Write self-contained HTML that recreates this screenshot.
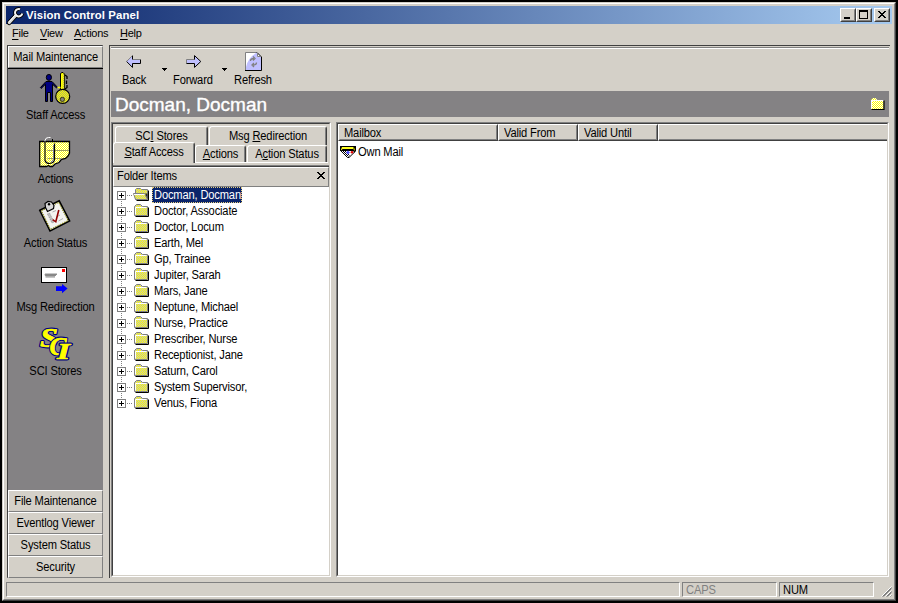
<!DOCTYPE html>
<html><head><meta charset="utf-8"><title>Vision Control Panel</title><style>
html,body{margin:0;padding:0;background:#000;}
body{width:898px;height:603px;position:relative;overflow:hidden;font-family:"Liberation Sans",sans-serif;font-size:11px;color:#000;}
div,span{position:absolute;box-sizing:border-box;white-space:nowrap;}
u{text-decoration:underline;text-decoration-thickness:1px;text-underline-offset:1px;}
.m u{text-underline-offset:2px;}
.m{font-size:11px;line-height:13px;height:13px;letter-spacing:-0.25px;}
.t{font-size:12.5px;line-height:14px;height:14px;letter-spacing:-0.17px;transform:scaleX(.89);transform-origin:0 0;}
.c{text-align:center;transform-origin:50% 0;}
svg{position:absolute;overflow:visible;}
.btn{background:#d4d0c8;border:1px solid;border-color:#fff #808080 #808080 #fff;}
.sunk1{border:1px solid;border-color:#808080 #fff #fff #808080;}
</style></head><body>
<div style="left:2px;top:2px;width:894px;height:599px;background:#d4d0c8;border:1px solid;border-color:#d4d0c8 #404040 #404040 #d4d0c8;"></div>
<div style="left:3px;top:3px;width:892px;height:597px;border:1px solid;border-color:#fff #808080 #808080 #fff;"></div>
<div style="left:6px;top:6px;width:886px;height:18px;background:linear-gradient(to right,#0a246a 0%,#a6caf0 100%);"></div>
<div style="left:26px;top:9px;line-height:13px;color:#fff;font-weight:bold;font-size:11.4px;letter-spacing:0.1px;">Vision Control Panel</div>
<svg style="left:0px;top:0.7px" width="30" height="26" viewBox="0 0 30 26">
<path d="M9.2 21.8 L15.6 14.8" stroke="#000" stroke-width="4.6" stroke-linecap="round" fill="none"/>
<path d="M20.0 8.2 A3.7 3.7 0 1 0 22.3 12.6" fill="none" stroke="#000" stroke-width="3.8"/>
<path d="M9.2 21.8 L15.8 14.6" stroke="#d8d8d8" stroke-width="2.8" stroke-linecap="round" fill="none"/>
<path d="M8.8 21 L15 14.2" stroke="#fff" stroke-width="1" stroke-linecap="round" fill="none"/>
<path d="M20.0 8.2 A3.7 3.7 0 1 0 22.3 12.6" fill="none" stroke="#f0f0f0" stroke-width="2"/>
</svg>

<div style="left:840px;top:8px;width:16px;height:14px;background:#d4d0c8;border:1px solid;border-color:#fff #404040 #404040 #fff;"></div>
<div style="left:841px;top:9px;width:14px;height:12px;border:1px solid;border-color:#d4d0c8 #808080 #808080 #d4d0c8;"></div>
<div style="left:856px;top:8px;width:16px;height:14px;background:#d4d0c8;border:1px solid;border-color:#fff #404040 #404040 #fff;"></div>
<div style="left:857px;top:9px;width:14px;height:12px;border:1px solid;border-color:#d4d0c8 #808080 #808080 #d4d0c8;"></div>
<div style="left:874px;top:8px;width:16px;height:14px;background:#d4d0c8;border:1px solid;border-color:#fff #404040 #404040 #fff;"></div>
<div style="left:875px;top:9px;width:14px;height:12px;border:1px solid;border-color:#d4d0c8 #808080 #808080 #d4d0c8;"></div>
<div style="left:844px;top:17px;width:6px;height:2px;background:#000;"></div>
<div style="left:859px;top:10px;width:9px;height:9px;border:1px solid #000;border-top-width:2px;"></div>
<svg style="left:878px;top:11px" width="8" height="7" viewBox="0 0 8 7"><path d="M0 0h2v1h1v1h2v-1h1v-1h2v1h-1v1h-1v1h-1v1h1v1h1v1h1v1h-2v-1h-1v-1h-2v1h-1v1h-2v-1h1v-1h1v-1h1v-1h-1v-1h-1v-1h-1z" fill="#000"/></svg>
<div class="m" style="left:12px;top:27px;"><u>F</u>ile</div>
<div class="m" style="left:40px;top:27px;"><u>V</u>iew</div>
<div class="m" style="left:74px;top:27px;"><u>A</u>ctions</div>
<div class="m" style="left:120px;top:27px;"><u>H</u>elp</div>
<div style="left:7px;top:45px;width:96px;height:533px;background:#848284;border:1px solid;border-color:#404040 #848284 #848284 #404040;"></div>
<div class="btn" style="left:8px;top:46px;width:95px;height:22px;"></div>
<div class="t c" style="left:8px;top:50px;width:95px;">Mail Maintenance</div>
<div style="left:8px;top:68px;width:95px;height:1px;background:#000;"></div>
<div class="btn" style="left:8px;top:490px;width:95px;height:22px;"></div>
<div class="t c" style="left:8px;top:494px;width:95px;">File Maintenance</div>
<div class="btn" style="left:8px;top:512px;width:95px;height:22px;"></div>
<div class="t c" style="left:8px;top:516px;width:95px;">Eventlog Viewer</div>
<div class="btn" style="left:8px;top:534px;width:95px;height:22px;"></div>
<div class="t c" style="left:8px;top:538px;width:95px;">System Status</div>
<div class="btn" style="left:8px;top:556px;width:95px;height:22px;"></div>
<div class="t c" style="left:8px;top:560px;width:95px;">Security</div>
<div class="t c" style="left:8px;top:108px;width:95px;">Staff Access</div>
<div class="t c" style="left:8px;top:172px;width:95px;">Actions</div>
<div class="t c" style="left:8px;top:236px;width:95px;">Action Status</div>
<div class="t c" style="left:8px;top:300px;width:95px;">Msg Redirection</div>
<div class="t c" style="left:8px;top:364px;width:95px;">SCI Stores</div>
<svg width="0" height="0" style="left:0;top:0"><defs>
<pattern id="dy" width="2" height="2" patternUnits="userSpaceOnUse"><rect width="2" height="2" fill="#ffff00"/><rect width="1" height="1" fill="#b0b060"/><rect x="1" y="1" width="1" height="1" fill="#b0b060"/></pattern>
<pattern id="dw" width="2" height="2" patternUnits="userSpaceOnUse"><rect width="2" height="2" fill="#ffff00"/><rect width="1" height="1" fill="#fff"/><rect x="1" y="1" width="1" height="1" fill="#fff"/></pattern>
<pattern id="dg" width="2" height="2" patternUnits="userSpaceOnUse"><rect width="2" height="2" fill="#ffff00"/><rect width="1" height="1" fill="#c0c0c0"/><rect x="1" y="1" width="1" height="1" fill="#c0c0c0"/></pattern>
</defs></svg>
<svg style="left:39px;top:72px" width="32" height="32" viewBox="0 0 32 32">
<g fill="#000080" stroke="#000" stroke-width="1">
<ellipse cx="9.9" cy="5.4" rx="2.6" ry="3"/>
<path d="M7 9.5 H13 L18.4 15.2 L17.6 16 L13.5 12.2 V29.5 H11.5 V20.5 H8.5 V29.5 H6.5 V12.2 L2.2 16.4 L1.4 15.6 Z"/>
</g>
<path d="M21.5 17.5 V1.5 L23 0.5 H24 L25.5 2 V17.5" fill="#ffff00" stroke="#000"/>
<rect x="23.6" y="2" width="1.6" height="15" fill="url(#dy)"/>
<path d="M26 3 L28 4.5 V7 M27.5 8.5 V12 M28 13 V15.5 L26 17" stroke="#000" fill="none" stroke-width="1.3"/>
<circle cx="23.7" cy="24.4" r="7" fill="url(#dy)" stroke="#000" stroke-width="1.2"/>
<circle cx="23.4" cy="27.4" r="2.1" fill="#848284" stroke="#303000" stroke-width="0.9"/>
<path d="M18.5 15.5 H21.5" stroke="#ffff00" stroke-width="1.5"/>
</svg>
<svg style="left:39px;top:136px" width="32" height="32" viewBox="0 0 32 32">
<path d="M0.7 5.5 H30.5 V17 L29 20 L26.5 22.5 L22.5 23.3 L20 26.5 L16 28 L13.5 30.5 H11 L9.5 29.5 L7.5 30.5 H0.7 Z" fill="url(#dw)" stroke="#000" stroke-width="1.3"/>
<path d="M8.5 14.5 H30 M8.5 22.5 H22" stroke="#a0a060" fill="none"/>
<path d="M6 6 V4.5 Q6.5 1.5 9.5 1.5 H11.5" stroke="#fff" fill="none" stroke-width="1"/>
<path d="M6 5 V24.5 Q7 27.5 10.5 27.5 Q15.5 27 15.5 23 V7.5" stroke="#000" fill="none" stroke-width="1.2"/>
<path d="M14.5 9 V23 Q14 25.5 12 26" stroke="#808080" fill="none"/>
<path d="M13.5 3 V5" stroke="#000" fill="none"/>
</svg>
<svg style="left:39px;top:200px" width="32" height="32" viewBox="0 0 32 32">
<path d="M0.8 10.3 L20.2 0.8 L30.6 21 L11 31 Z" fill="#f4f4f0" stroke="#000" stroke-width="1.6"/>
<path d="M2.4 10.8 L19.7 2.4 L29 20.5 L11.5 29.4 Z" fill="none" stroke="#808000" stroke-width="1" stroke-dasharray="1.5 1"/>
<path d="M6.5 7.5 L6 3.5 L9 1.5 L12.5 2 L15 5.5 L14.5 8.5 L8.5 11.5 Z" fill="#d8d8d8" stroke="#000" stroke-width="1.2"/>
<circle cx="10" cy="4.2" r="1.2" fill="#000"/>
<path d="M8.5 14 L10.5 13 L15 22 L13 23 Z" fill="#c0c0c0" stroke="#808080" stroke-width="0.8" stroke-dasharray="1 1"/>
<path d="M13.5 12 L17 10.5 M17.5 17 L21 15 M19.5 21 L24 18.5" stroke="#b0b0b0" fill="none"/>
<path d="M13.6 19.6 L16.8 21.8 L19.8 10" stroke="#900000" fill="none" stroke-width="1.6"/>
</svg>
<svg style="left:39px;top:264px" width="32" height="32" viewBox="0 0 32 32">
<rect x="2.5" y="3.5" width="25" height="15" fill="#fff" stroke="#000" stroke-width="1"/>
<rect x="23" y="5" width="3" height="3" fill="#ff0000"/>
<path d="M6 10 H18 L16 12 H6.5 Z M6.5 13 H16" fill="#808080" stroke="#909090"/>
<path d="M17 22.2 H23 V20 L28.6 24.6 L23 29.2 V27 H17 Z" fill="#0000ff"/>
</svg>
<svg style="left:39px;top:328px" width="34" height="34" viewBox="0 0 34 34" font-family="'Liberation Serif',serif" font-weight="bold" font-style="italic" stroke-linejoin="round">
<text x="1" y="18.5" font-size="27" textLength="18" lengthAdjust="spacingAndGlyphs" fill="#000080" stroke="#000080" stroke-width="2.8">S</text>
<text x="1" y="18.5" font-size="27" textLength="18" lengthAdjust="spacingAndGlyphs" fill="#ffff00" stroke="#ffff00" stroke-width="0.7">S</text>
<text x="10.5" y="27" font-size="26" textLength="17" lengthAdjust="spacingAndGlyphs" fill="#000080" stroke="#000080" stroke-width="2.8">C</text>
<text x="10.5" y="27" font-size="26" textLength="17" lengthAdjust="spacingAndGlyphs" fill="#ffff00" stroke="#ffff00" stroke-width="0.7">C</text>
<text x="18" y="31" font-size="23" textLength="13" lengthAdjust="spacingAndGlyphs" fill="#000080" stroke="#000080" stroke-width="2.8">I</text>
<text x="18" y="31" font-size="23" textLength="13" lengthAdjust="spacingAndGlyphs" fill="#ffff00" stroke="#ffff00" stroke-width="0.7">I</text>
</svg>

<div style="left:109px;top:45px;width:781px;height:533px;border-left:1px solid #404040;border-top:1px solid #404040;"></div>
<div style="left:111px;top:47px;width:778px;height:2px;border-top:1px solid #808080;border-bottom:1px solid #fff;"></div>
<div class="t" style="left:122px;top:73px;">Back</div>
<div class="t" style="left:173px;top:73px;">Forward</div>
<div class="t" style="left:234px;top:73px;">Refresh</div>
<svg style="left:126px;top:55px" width="16" height="14" viewBox="0 0 16 14"><path d="M6.5 0.6 V4.5 H14.5 V8.5 H6.5 V12.4 L0.6 6.5 Z" fill="#c0c0ff"/><path d="M0.8 6.3 L6.3 0.8" stroke="#808080" fill="none"/><path d="M7 4.5 H14" stroke="#808080" fill="none"/><path d="M6.5 0.6 V4.5 M14.5 4.5 V8.5 H6.5 V12.4 L0.6 6.5" stroke="#000" fill="none"/></svg>
<svg style="left:186px;top:55px" width="16" height="14" viewBox="0 0 16 14"><path d="M8.5 0.6 V4.5 H0.5 V8.5 H8.5 V12.4 L14.8 6.5 Z" fill="#c0c0ff"/><path d="M0.5 8.5 V4.5 H8.5" stroke="#808080" fill="none"/><path d="M8.5 4.5 V0.6 L14.8 6.5 L8.5 12.4 V8.5 H0.5" stroke="#000" fill="none"/></svg>
<svg style="left:162px;top:68px" width="5" height="3" viewBox="0 0 5 3"><path d="M0 0h5v1h-1v1h-1v1h-1v-1h-1v-1h-1z" fill="#000"/></svg>
<svg style="left:222px;top:68px" width="5" height="3" viewBox="0 0 5 3"><path d="M0 0h5v1h-1v1h-1v1h-1v-1h-1v-1h-1z" fill="#000"/></svg>
<svg style="left:245px;top:52px" width="17" height="19" viewBox="0 0 17 19"><path d="M0.5 0.5 H12 L16 4.5 V18 H0.5 Z" fill="#c0c0ff"/><path d="M1 1 H11 Q3 6 1 15 Z" fill="#fff"/><path d="M12 0.5 V5 H16.5 Z" fill="#fff"/><path d="M0.5 18.5 V0.5 H12" stroke="#808080" fill="none"/><path d="M12 0.5 L16.5 5 V18.5 H0" stroke="#000" fill="none"/><path d="M12.5 1.5 V4.5 H15.5" stroke="#808080" fill="none"/><path d="M5.5 9 Q5.5 6.5 9 6.5 M8 4.5 L10 6.5 L8 8.5 M11.5 10.5 Q11.5 13 8 13 M9 11 L7 13 L9 15" stroke="#808080" fill="none" stroke-width="1.3"/></svg>

<div style="left:111px;top:91px;width:778px;height:26px;background:#848284;"></div>
<div style="left:115px;top:94px;font-size:19px;line-height:22px;color:#fff;letter-spacing:0px;-webkit-text-stroke:0.35px #fff;">Docman, Docman</div>
<svg style="left:871px;top:98px" width="14" height="12" viewBox="0 0 14 12"><path d="M0 2 L2 0 H4.5 L6.5 2 H12.5 V11 H0 Z" fill="url(#dw)"/><path d="M0.5 10.5 V2.5 H12" stroke="#fff" fill="none"/><path d="M13 2.5 V11.5 H0.5" stroke="#000" fill="none" stroke-width="1.2"/></svg>
<div style="left:111px;top:122px;width:220px;height:455px;border:1px solid;border-color:#808080 #fff #fff #808080;"></div>
<div style="left:112px;top:123px;width:218px;height:453px;border:1px solid;border-color:#404040 #d4d0c8 #d4d0c8 #404040;"></div>
<div style="left:115px;top:126px;width:93px;height:19px;border-left:1px solid #fff;border-top:1px solid #fff;border-right:1px solid #404040;border-radius:3px 3px 0 0;background:#d4d0c8;"></div>
<div style="left:206px;top:128px;width:1px;height:17px;background:#808080;"></div>
<div class="t c" style="left:115px;top:129px;width:93px;">SC<u>I</u> Stores</div>
<div style="left:209px;top:126px;width:118px;height:19px;border-left:1px solid #fff;border-top:1px solid #fff;border-right:1px solid #404040;border-radius:3px 3px 0 0;background:#d4d0c8;"></div>
<div style="left:325px;top:128px;width:1px;height:17px;background:#808080;"></div>
<div class="t c" style="left:209px;top:129px;width:118px;">Msg <u>R</u>edirection</div>
<div style="left:195px;top:145px;width:51px;height:17px;border-left:1px solid #fff;border-top:1px solid #fff;border-right:1px solid #404040;border-radius:3px 3px 0 0;background:#d4d0c8;"></div>
<div style="left:244px;top:147px;width:1px;height:15px;background:#808080;"></div>
<div class="t c" style="left:195px;top:147px;width:51px;"><u>A</u>ctions</div>
<div style="left:247px;top:145px;width:80px;height:17px;border-left:1px solid #fff;border-top:1px solid #fff;border-right:1px solid #404040;border-radius:3px 3px 0 0;background:#d4d0c8;"></div>
<div style="left:325px;top:147px;width:1px;height:15px;background:#808080;"></div>
<div class="t c" style="left:247px;top:147px;width:80px;">A<u>c</u>tion Status</div>
<div style="left:113px;top:162px;width:215px;height:1px;background:#fff;"></div>
<div style="left:113px;top:142px;width:82px;height:21px;border-left:1px solid #fff;border-top:1px solid #fff;border-right:1px solid #404040;border-radius:3px 3px 0 0;background:#d4d0c8;"></div>
<div style="left:193px;top:144px;width:1px;height:19px;background:#808080;"></div>
<div class="t c" style="left:113px;top:145px;width:82px;"><u>S</u>taff Access</div>
<div style="left:113px;top:165px;width:216px;height:411px;border-top:1px solid #808080;"></div>
<div style="left:113px;top:166px;width:216px;height:409px;border-top:1px solid #404040;background:#fff"></div>
<div style="left:113px;top:167px;width:216px;height:20px;background:#d4d0c8;border:1px solid;border-color:#fff #808080 #808080 #fff;"></div>
<div class="t" style="left:117px;top:169px;">Folder Items</div>
<svg style="left:317px;top:172px" width="8" height="7" viewBox="0 0 8 7"><path d="M0 0h2v1h1v1h2v-1h1v-1h2v1h-1v1h-1v1h-1v1h1v1h1v1h1v1h-2v-1h-1v-1h-2v1h-1v1h-2v-1h1v-1h1v-1h1v-1h-1v-1h-1v-1h-1z" fill="#000"/></svg>
<div style="left:121px;top:197px;width:1px;height:206px;background:repeating-linear-gradient(to bottom,#808080 0,#808080 1px,transparent 1px,transparent 2px);"></div>
<div style="left:127px;top:195px;width:5px;height:1px;background:repeating-linear-gradient(to right,#808080 0,#808080 1px,transparent 1px,transparent 2px);"></div>
<div style="left:117px;top:191px;width:9px;height:9px;border:1px solid #808080;background:#fff;"></div>
<div style="left:119px;top:195px;width:5px;height:1px;background:#000;"></div>
<div style="left:121px;top:193px;width:1px;height:5px;background:#000;"></div>
<svg style="left:133px;top:187px" width="17" height="14" viewBox="0 0 17 14"><path d="M2.5 12.5 V2.5 L3.5 1.5 H7.5 L8.5 2.5 H14.5 V12.5 Z" fill="url(#dg)" stroke="#808080"/><path d="M12 6.5 H14.5 V12.5 Z" fill="#303030"/><path d="M0.5 6.5 H11.5 L14.5 12.5 H2.5 Z" fill="url(#dg)" stroke="#808080"/><path d="M1 7.5 H11.5" stroke="#fff" fill="none"/><path d="M15.5 3.5 V13.5 H3.5" stroke="#000" fill="none"/></svg>
<div style="left:152px;top:187px;width:90px;height:16px;background:#0a246a;border:1px dotted #e8d080;"></div>
<div class="t" style="left:154px;top:188px;color:#fff;">Docman, Docman</div>
<div style="left:127px;top:211px;width:5px;height:1px;background:repeating-linear-gradient(to right,#808080 0,#808080 1px,transparent 1px,transparent 2px);"></div>
<div style="left:117px;top:207px;width:9px;height:9px;border:1px solid #808080;background:#fff;"></div>
<div style="left:119px;top:211px;width:5px;height:1px;background:#000;"></div>
<div style="left:121px;top:209px;width:1px;height:5px;background:#000;"></div>
<svg style="left:134px;top:203px" width="16" height="14" viewBox="0 0 16 14"><path d="M0.5 12.5 V3.5 L2.5 1.5 H6.5 L8.5 3.5 H13.5 V12.5 Z" fill="url(#dg)" stroke="#808080"/><path d="M1.5 11.5 V4.5 H12.5" stroke="#fff" fill="none"/><path d="M14.5 4.5 V13.5 H1.5" stroke="#000" fill="none"/></svg>
<div class="t" style="left:154px;top:204px;">Doctor, Associate</div>
<div style="left:127px;top:227px;width:5px;height:1px;background:repeating-linear-gradient(to right,#808080 0,#808080 1px,transparent 1px,transparent 2px);"></div>
<div style="left:117px;top:223px;width:9px;height:9px;border:1px solid #808080;background:#fff;"></div>
<div style="left:119px;top:227px;width:5px;height:1px;background:#000;"></div>
<div style="left:121px;top:225px;width:1px;height:5px;background:#000;"></div>
<svg style="left:134px;top:219px" width="16" height="14" viewBox="0 0 16 14"><path d="M0.5 12.5 V3.5 L2.5 1.5 H6.5 L8.5 3.5 H13.5 V12.5 Z" fill="url(#dg)" stroke="#808080"/><path d="M1.5 11.5 V4.5 H12.5" stroke="#fff" fill="none"/><path d="M14.5 4.5 V13.5 H1.5" stroke="#000" fill="none"/></svg>
<div class="t" style="left:154px;top:220px;">Doctor, Locum</div>
<div style="left:127px;top:243px;width:5px;height:1px;background:repeating-linear-gradient(to right,#808080 0,#808080 1px,transparent 1px,transparent 2px);"></div>
<div style="left:117px;top:239px;width:9px;height:9px;border:1px solid #808080;background:#fff;"></div>
<div style="left:119px;top:243px;width:5px;height:1px;background:#000;"></div>
<div style="left:121px;top:241px;width:1px;height:5px;background:#000;"></div>
<svg style="left:134px;top:235px" width="16" height="14" viewBox="0 0 16 14"><path d="M0.5 12.5 V3.5 L2.5 1.5 H6.5 L8.5 3.5 H13.5 V12.5 Z" fill="url(#dg)" stroke="#808080"/><path d="M1.5 11.5 V4.5 H12.5" stroke="#fff" fill="none"/><path d="M14.5 4.5 V13.5 H1.5" stroke="#000" fill="none"/></svg>
<div class="t" style="left:154px;top:236px;">Earth, Mel</div>
<div style="left:127px;top:259px;width:5px;height:1px;background:repeating-linear-gradient(to right,#808080 0,#808080 1px,transparent 1px,transparent 2px);"></div>
<div style="left:117px;top:255px;width:9px;height:9px;border:1px solid #808080;background:#fff;"></div>
<div style="left:119px;top:259px;width:5px;height:1px;background:#000;"></div>
<div style="left:121px;top:257px;width:1px;height:5px;background:#000;"></div>
<svg style="left:134px;top:251px" width="16" height="14" viewBox="0 0 16 14"><path d="M0.5 12.5 V3.5 L2.5 1.5 H6.5 L8.5 3.5 H13.5 V12.5 Z" fill="url(#dg)" stroke="#808080"/><path d="M1.5 11.5 V4.5 H12.5" stroke="#fff" fill="none"/><path d="M14.5 4.5 V13.5 H1.5" stroke="#000" fill="none"/></svg>
<div class="t" style="left:154px;top:252px;">Gp, Trainee</div>
<div style="left:127px;top:275px;width:5px;height:1px;background:repeating-linear-gradient(to right,#808080 0,#808080 1px,transparent 1px,transparent 2px);"></div>
<div style="left:117px;top:271px;width:9px;height:9px;border:1px solid #808080;background:#fff;"></div>
<div style="left:119px;top:275px;width:5px;height:1px;background:#000;"></div>
<div style="left:121px;top:273px;width:1px;height:5px;background:#000;"></div>
<svg style="left:134px;top:267px" width="16" height="14" viewBox="0 0 16 14"><path d="M0.5 12.5 V3.5 L2.5 1.5 H6.5 L8.5 3.5 H13.5 V12.5 Z" fill="url(#dg)" stroke="#808080"/><path d="M1.5 11.5 V4.5 H12.5" stroke="#fff" fill="none"/><path d="M14.5 4.5 V13.5 H1.5" stroke="#000" fill="none"/></svg>
<div class="t" style="left:154px;top:268px;">Jupiter, Sarah</div>
<div style="left:127px;top:291px;width:5px;height:1px;background:repeating-linear-gradient(to right,#808080 0,#808080 1px,transparent 1px,transparent 2px);"></div>
<div style="left:117px;top:287px;width:9px;height:9px;border:1px solid #808080;background:#fff;"></div>
<div style="left:119px;top:291px;width:5px;height:1px;background:#000;"></div>
<div style="left:121px;top:289px;width:1px;height:5px;background:#000;"></div>
<svg style="left:134px;top:283px" width="16" height="14" viewBox="0 0 16 14"><path d="M0.5 12.5 V3.5 L2.5 1.5 H6.5 L8.5 3.5 H13.5 V12.5 Z" fill="url(#dg)" stroke="#808080"/><path d="M1.5 11.5 V4.5 H12.5" stroke="#fff" fill="none"/><path d="M14.5 4.5 V13.5 H1.5" stroke="#000" fill="none"/></svg>
<div class="t" style="left:154px;top:284px;">Mars, Jane</div>
<div style="left:127px;top:307px;width:5px;height:1px;background:repeating-linear-gradient(to right,#808080 0,#808080 1px,transparent 1px,transparent 2px);"></div>
<div style="left:117px;top:303px;width:9px;height:9px;border:1px solid #808080;background:#fff;"></div>
<div style="left:119px;top:307px;width:5px;height:1px;background:#000;"></div>
<div style="left:121px;top:305px;width:1px;height:5px;background:#000;"></div>
<svg style="left:134px;top:299px" width="16" height="14" viewBox="0 0 16 14"><path d="M0.5 12.5 V3.5 L2.5 1.5 H6.5 L8.5 3.5 H13.5 V12.5 Z" fill="url(#dg)" stroke="#808080"/><path d="M1.5 11.5 V4.5 H12.5" stroke="#fff" fill="none"/><path d="M14.5 4.5 V13.5 H1.5" stroke="#000" fill="none"/></svg>
<div class="t" style="left:154px;top:300px;">Neptune, Michael</div>
<div style="left:127px;top:323px;width:5px;height:1px;background:repeating-linear-gradient(to right,#808080 0,#808080 1px,transparent 1px,transparent 2px);"></div>
<div style="left:117px;top:319px;width:9px;height:9px;border:1px solid #808080;background:#fff;"></div>
<div style="left:119px;top:323px;width:5px;height:1px;background:#000;"></div>
<div style="left:121px;top:321px;width:1px;height:5px;background:#000;"></div>
<svg style="left:134px;top:315px" width="16" height="14" viewBox="0 0 16 14"><path d="M0.5 12.5 V3.5 L2.5 1.5 H6.5 L8.5 3.5 H13.5 V12.5 Z" fill="url(#dg)" stroke="#808080"/><path d="M1.5 11.5 V4.5 H12.5" stroke="#fff" fill="none"/><path d="M14.5 4.5 V13.5 H1.5" stroke="#000" fill="none"/></svg>
<div class="t" style="left:154px;top:316px;">Nurse, Practice</div>
<div style="left:127px;top:339px;width:5px;height:1px;background:repeating-linear-gradient(to right,#808080 0,#808080 1px,transparent 1px,transparent 2px);"></div>
<div style="left:117px;top:335px;width:9px;height:9px;border:1px solid #808080;background:#fff;"></div>
<div style="left:119px;top:339px;width:5px;height:1px;background:#000;"></div>
<div style="left:121px;top:337px;width:1px;height:5px;background:#000;"></div>
<svg style="left:134px;top:331px" width="16" height="14" viewBox="0 0 16 14"><path d="M0.5 12.5 V3.5 L2.5 1.5 H6.5 L8.5 3.5 H13.5 V12.5 Z" fill="url(#dg)" stroke="#808080"/><path d="M1.5 11.5 V4.5 H12.5" stroke="#fff" fill="none"/><path d="M14.5 4.5 V13.5 H1.5" stroke="#000" fill="none"/></svg>
<div class="t" style="left:154px;top:332px;">Prescriber, Nurse</div>
<div style="left:127px;top:355px;width:5px;height:1px;background:repeating-linear-gradient(to right,#808080 0,#808080 1px,transparent 1px,transparent 2px);"></div>
<div style="left:117px;top:351px;width:9px;height:9px;border:1px solid #808080;background:#fff;"></div>
<div style="left:119px;top:355px;width:5px;height:1px;background:#000;"></div>
<div style="left:121px;top:353px;width:1px;height:5px;background:#000;"></div>
<svg style="left:134px;top:347px" width="16" height="14" viewBox="0 0 16 14"><path d="M0.5 12.5 V3.5 L2.5 1.5 H6.5 L8.5 3.5 H13.5 V12.5 Z" fill="url(#dg)" stroke="#808080"/><path d="M1.5 11.5 V4.5 H12.5" stroke="#fff" fill="none"/><path d="M14.5 4.5 V13.5 H1.5" stroke="#000" fill="none"/></svg>
<div class="t" style="left:154px;top:348px;">Receptionist, Jane</div>
<div style="left:127px;top:371px;width:5px;height:1px;background:repeating-linear-gradient(to right,#808080 0,#808080 1px,transparent 1px,transparent 2px);"></div>
<div style="left:117px;top:367px;width:9px;height:9px;border:1px solid #808080;background:#fff;"></div>
<div style="left:119px;top:371px;width:5px;height:1px;background:#000;"></div>
<div style="left:121px;top:369px;width:1px;height:5px;background:#000;"></div>
<svg style="left:134px;top:363px" width="16" height="14" viewBox="0 0 16 14"><path d="M0.5 12.5 V3.5 L2.5 1.5 H6.5 L8.5 3.5 H13.5 V12.5 Z" fill="url(#dg)" stroke="#808080"/><path d="M1.5 11.5 V4.5 H12.5" stroke="#fff" fill="none"/><path d="M14.5 4.5 V13.5 H1.5" stroke="#000" fill="none"/></svg>
<div class="t" style="left:154px;top:364px;">Saturn, Carol</div>
<div style="left:127px;top:387px;width:5px;height:1px;background:repeating-linear-gradient(to right,#808080 0,#808080 1px,transparent 1px,transparent 2px);"></div>
<div style="left:117px;top:383px;width:9px;height:9px;border:1px solid #808080;background:#fff;"></div>
<div style="left:119px;top:387px;width:5px;height:1px;background:#000;"></div>
<div style="left:121px;top:385px;width:1px;height:5px;background:#000;"></div>
<svg style="left:134px;top:379px" width="16" height="14" viewBox="0 0 16 14"><path d="M0.5 12.5 V3.5 L2.5 1.5 H6.5 L8.5 3.5 H13.5 V12.5 Z" fill="url(#dg)" stroke="#808080"/><path d="M1.5 11.5 V4.5 H12.5" stroke="#fff" fill="none"/><path d="M14.5 4.5 V13.5 H1.5" stroke="#000" fill="none"/></svg>
<div class="t" style="left:154px;top:380px;">System Supervisor,</div>
<div style="left:127px;top:403px;width:5px;height:1px;background:repeating-linear-gradient(to right,#808080 0,#808080 1px,transparent 1px,transparent 2px);"></div>
<div style="left:117px;top:399px;width:9px;height:9px;border:1px solid #808080;background:#fff;"></div>
<div style="left:119px;top:403px;width:5px;height:1px;background:#000;"></div>
<div style="left:121px;top:401px;width:1px;height:5px;background:#000;"></div>
<svg style="left:134px;top:395px" width="16" height="14" viewBox="0 0 16 14"><path d="M0.5 12.5 V3.5 L2.5 1.5 H6.5 L8.5 3.5 H13.5 V12.5 Z" fill="url(#dg)" stroke="#808080"/><path d="M1.5 11.5 V4.5 H12.5" stroke="#fff" fill="none"/><path d="M14.5 4.5 V13.5 H1.5" stroke="#000" fill="none"/></svg>
<div class="t" style="left:154px;top:396px;">Venus, Fiona</div>
<div style="left:336px;top:122px;width:553px;height:455px;border:1px solid;border-color:#808080 #fff #fff #808080;"></div>
<div style="left:337px;top:123px;width:551px;height:453px;border:1px solid;border-color:#404040 #d4d0c8 #d4d0c8 #404040;background:#fff;"></div>
<div style="left:338px;top:124px;width:160px;height:17px;background:#d4d0c8;border:1px solid;border-color:#fff #404040 #404040 #fff;"></div>
<div style="left:339px;top:125px;width:158px;height:15px;border:1px solid;border-color:#d4d0c8 #808080 #808080 #d4d0c8;"></div>
<div class="t" style="left:344px;top:126px;">Mailbox</div>
<div style="left:498px;top:124px;width:80px;height:17px;background:#d4d0c8;border:1px solid;border-color:#fff #404040 #404040 #fff;"></div>
<div style="left:499px;top:125px;width:78px;height:15px;border:1px solid;border-color:#d4d0c8 #808080 #808080 #d4d0c8;"></div>
<div class="t" style="left:504px;top:126px;">Valid From</div>
<div style="left:578px;top:124px;width:80px;height:17px;background:#d4d0c8;border:1px solid;border-color:#fff #404040 #404040 #fff;"></div>
<div style="left:579px;top:125px;width:78px;height:15px;border:1px solid;border-color:#d4d0c8 #808080 #808080 #d4d0c8;"></div>
<div class="t" style="left:584px;top:126px;">Valid Until</div>
<div style="left:658px;top:124px;width:229px;height:17px;background:#d4d0c8;border:1px solid;border-color:#fff #d4d0c8 #404040 #fff;border-right:0;"></div>
<div style="left:659px;top:125px;width:228px;height:15px;border-bottom:1px solid #808080;"></div>
<div class="t" style="left:358px;top:145px;">Own Mail</div>
<svg style="left:340px;top:146px" width="16" height="12" viewBox="0 0 16 12">
<path d="M3 5 L8 11 L14 5 Z" fill="#fff"/>
<path d="M0 0 H16 V5 L14.5 6.5 L13 5 H0 Z" fill="#000"/>
<path d="M1 3.6 L2 1 H13.5 L13 3 H2.6 L1 4.6 Z" fill="#ffff20"/>
<path d="M13.5 1 L15 3 V5 L13 3 Z" fill="#a0a000"/>
<path d="M1 5 L7.5 11.5 M3 5 L8.5 10.5 M5 5 L9.5 9.5 M15.2 5.5 L9 11.5 L7.5 11.5" stroke="#000" fill="none" stroke-width="1"/>
<path d="M8 4.5 L10 6.5 L8 8.5 L6 6.5 Z" fill="#5050ff"/>
<circle cx="12" cy="6.3" r="1.3" fill="#e00000"/>
</svg>

<div class="sunk1" style="left:6px;top:582px;width:674px;height:15px;"></div>
<div class="sunk1" style="left:682px;top:582px;width:95px;height:15px;"></div>
<div class="sunk1" style="left:779px;top:582px;width:95px;height:15px;"></div>
<div class="t" style="left:686px;top:583px;color:#808080;">CAPS</div>
<div class="t" style="left:783px;top:583px;">NUM</div>
<svg style="left:882px;top:587px" width="10" height="10" viewBox="1 1 10 10"><path d="M10.5 0.5 L0.5 10.5 M10.5 4.5 L4.5 10.5 M10.5 8.5 L8.5 10.5" stroke="#fff" stroke-width="1"/><path d="M10.5 1.5 L1.5 10.5 M10.5 2.5 L2.5 10.5 M10.5 5.5 L5.5 10.5 M10.5 6.5 L6.5 10.5 M10.5 9.5 L9.5 10.5" stroke="#808080" stroke-width="1"/></svg>
</body></html>
